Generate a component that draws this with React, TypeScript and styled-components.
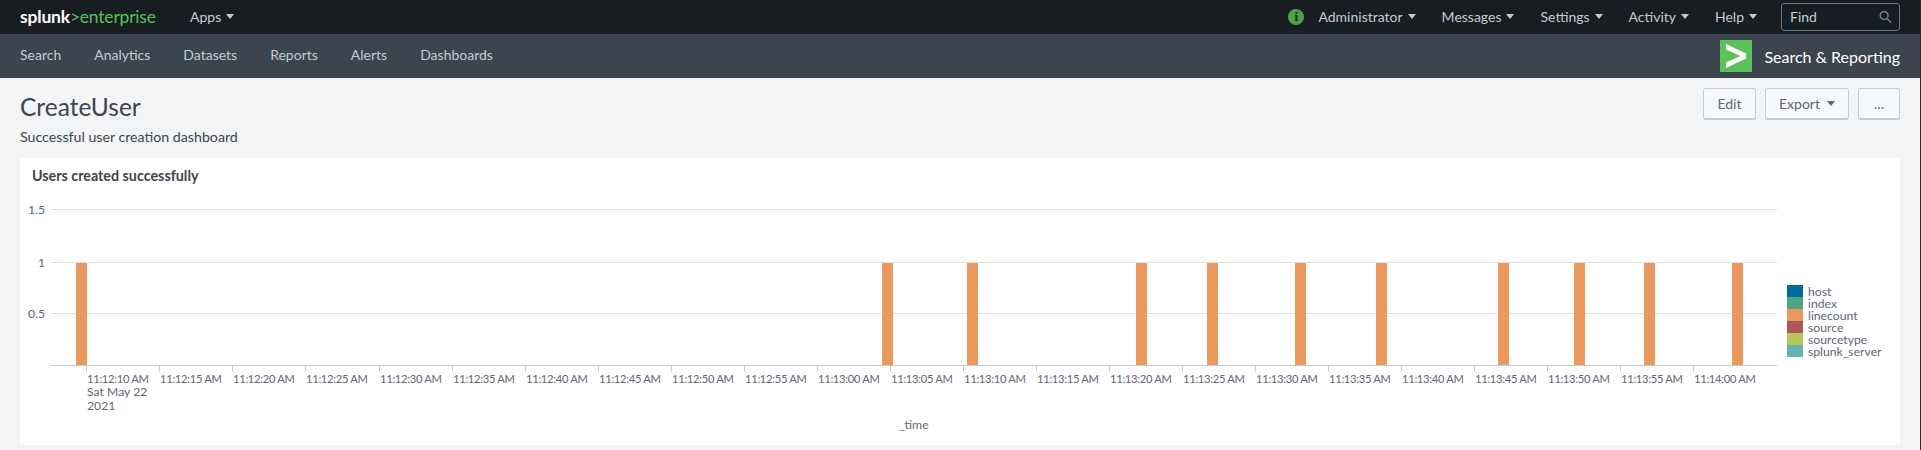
import styled, { createGlobalStyle } from 'styled-components';

const GlobalStyle = createGlobalStyle`
    html, body {
        margin: 0;
        padding: 0;
        background: #f2f4f5;
        font-family: Lato, "Liberation Sans", sans-serif;
        overflow: hidden;
    }
`;

const Page = styled.div`
    width: 1920px;
    height: 450px;
    border-right: 1px solid #2b3033;
    background: #f2f4f5;
`;

// Верхняя чёрная панель
const TopBar = styled.div`
    height: 34px;
    background: #171d21;
    display: flex;
    align-items: center;
    padding: 0 20px;
    box-sizing: border-box;
`;

const Logo = styled.div`
    width: 170px;
    padding-bottom: 2px;
    font-size: 17.5px;
    letter-spacing: -0.2px;
    color: #5cc05c;
`;

const LogoWhite = styled.span`
    color: #fff;
    font-weight: 700;
`;

const MenuButton = styled.div`
    display: flex;
    align-items: center;
    gap: 5px;
    padding-bottom: 2px;
    color: #c3cbd4;
    font-size: 14px;
`;

const Caret = styled.span`
    width: 0;
    height: 0;
    border-left: 4px solid transparent;
    border-right: 4px solid transparent;
    border-top: 5px solid currentColor;
`;

const RightMenu = styled.div`
    margin-left: auto;
    display: flex;
    align-items: center;
    gap: 26px;
`;

const StatusGroup = styled.div`
    display: flex;
    align-items: center;
    gap: 14px;
`;

const InfoDot = styled.span`
    width: 16px;
    height: 16px;
    border-radius: 50%;
    background: #4f9e4a;
    color: #10210f;
    font-family: "Liberation Serif", serif;
    font-size: 13px;
    font-weight: 700;
    display: flex;
    align-items: center;
    justify-content: center;
`;

const FindBox = styled.div`
    width: 119px;
    height: 28px;
    box-sizing: border-box;
    margin-left: -2px;
    border: 1px solid #6b7785;
    border-radius: 3px;
    padding: 0 7px 1px 8px;
    display: flex;
    align-items: center;
    justify-content: space-between;
    color: #c3cbd4;
    font-size: 14px;
`;

// Панель приложения
const AppBar = styled.div`
    height: 44px;
    background: #3c444d;
    display: flex;
    align-items: center;
    padding: 0 20px;
    box-sizing: border-box;
    gap: 33px;
`;

const AppLink = styled.div`
    padding-bottom: 3px;
    color: #c3cbd4;
    font-size: 14px;
`;

const AppTitle = styled.div`
    margin-left: auto;
    display: flex;
    align-items: center;
    gap: 12px;
    color: #fff;
    font-size: 16px;
`;

const AppIcon = styled.div`
    width: 32px;
    height: 32px;
`;

// Заголовок дашборда
const Header = styled.div`
    height: 80px;
    padding: 0 20px;
    display: flex;
    justify-content: space-between;
    box-sizing: border-box;
`;

const Title = styled.h1`
    margin: 14px 0 0;
    font-size: 24.5px;
    font-weight: 400;
    line-height: 30px;
    color: #3c444d;
`;

const Description = styled.p`
    margin: 6px 0 0;
    font-size: 14.2px;
    line-height: 18px;
    color: #3c444d;
`;

const Actions = styled.div`
    margin-top: 10px;
    display: flex;
    gap: 9px;
`;

const ActionButton = styled.div<{ $width: number }>`
    width: ${(p) => p.$width}px;
    height: 32px;
    box-sizing: border-box;
    display: flex;
    align-items: center;
    justify-content: center;
    gap: 7px;
    background: #f7f8fa;
    border: 1px solid #c3cbd4;
    border-bottom-width: 2px;
    border-radius: 3px;
    color: #5c6773;
    font-size: 14px;
`;

// Панель с графиком
const Panel = styled.section`
    margin: 0 20px;
    height: 287px;
    background: #fff;
    position: relative;
`;

const PanelTitle = styled.h2`
    margin: 0;
    padding: 9px 0 0 12px;
    font-size: 14.3px;
    font-weight: 700;
    line-height: 18px;
    color: #3c444d;
`;

const Chart = styled.svg`
    position: absolute;
    left: 0;
    top: 0;
    font-family: Lato, "Liberation Sans", sans-serif;
    font-size: 12.2px;
    fill: #5c6773;
`;

const TimeLabel = styled.text`
    font-size: 11.2px;
    letter-spacing: -0.3px;
`;

const TOP = 158;
const LEFT = 20;
const BASE = 365.5 - TOP;
const STEP = 73.05;

const labels = [
    '11:12:10', '11:12:15', '11:12:20', '11:12:25', '11:12:30', '11:12:35', '11:12:40', '11:12:45',
    '11:12:50', '11:12:55', '11:13:00', '11:13:05', '11:13:10', '11:13:15', '11:13:20', '11:13:25',
    '11:13:30', '11:13:35', '11:13:40', '11:13:45', '11:13:50', '11:13:55', '11:14:00',
];

const bars = [76, 882, 967, 1136, 1207, 1295, 1376, 1498, 1574, 1644, 1732];

const grid = [
    { y: 209.5, label: '1.5' },
    { y: 262.5, label: '1' },
    { y: 313.5, label: '0.5' },
];

const legend = [
    { name: 'host', color: '#006d9c' },
    { name: 'index', color: '#4fa484' },
    { name: 'linecount', color: '#ec9960' },
    { name: 'source', color: '#af575a' },
    { name: 'sourcetype', color: '#b6c75a' },
    { name: 'splunk_server', color: '#62b3b2' },
];

export default function App() {
    return (
        <Page>
            <GlobalStyle />
            <TopBar>
                <Logo>
                    <LogoWhite>splunk</LogoWhite>&gt;enterprise
                </Logo>
                <MenuButton>
                    Apps <Caret />
                </MenuButton>
                <RightMenu>
                    <StatusGroup>
                        <InfoDot>i</InfoDot>
                        <MenuButton>
                            Administrator <Caret />
                        </MenuButton>
                    </StatusGroup>
                    {['Messages', 'Settings', 'Activity', 'Help'].map((item) => (
                        <MenuButton key={item}>
                            {item} <Caret />
                        </MenuButton>
                    ))}
                    <FindBox>
                        Find
                        <svg width="13" height="14" viewBox="0 0 14 14" fill="none" stroke="#7c8793" strokeWidth="1.5">
                            <circle cx="5.5" cy="5.5" r="4.2" />
                            <path d="M8.8 8.8 L13 13" />
                        </svg>
                    </FindBox>
                </RightMenu>
            </TopBar>
            <AppBar>
                {['Search', 'Analytics', 'Datasets', 'Reports', 'Alerts', 'Dashboards'].map((item) => (
                    <AppLink key={item}>{item}</AppLink>
                ))}
                <AppTitle>
                    <AppIcon>
                        <svg width="32" height="32" viewBox="0 0 32 32">
                            <rect width="32" height="32" fill="#5cc05c" />
                            <path d="M6 4 L26 13.5 V18.5 L6 28 V22.5 L20.5 16 L6 9.5 Z" fill="#fff" />
                        </svg>
                    </AppIcon>
                    Search &amp; Reporting
                </AppTitle>
            </AppBar>
            <Header>
                <div>
                    <Title>CreateUser</Title>
                    <Description>Successful user creation dashboard</Description>
                </div>
                <Actions>
                    <ActionButton $width={53}>Edit</ActionButton>
                    <ActionButton $width={84}>
                        Export <Caret />
                    </ActionButton>
                    <ActionButton $width={42}>...</ActionButton>
                </Actions>
            </Header>
            <Panel>
                <PanelTitle>Users created successfully</PanelTitle>
                <Chart width="1880" height="287" viewBox="0 0 1880 287">
                    {grid.map((g) => (
                        <g key={g.label}>
                            <line x1={51 - LEFT} x2={1777 - LEFT} y1={g.y - TOP} y2={g.y - TOP} stroke="#dce0e5" />
                            <text x={25} y={g.y - TOP + 4} textAnchor="end">
                                {g.label}
                            </text>
                        </g>
                    ))}
                    {bars.map((x) => (
                        <rect key={x} x={x - LEFT} y={263 - TOP} width={11} height={BASE - (263 - TOP)} fill="#ec9960" />
                    ))}
                    <line x1={51 - LEFT} x2={1777 - LEFT} y1={BASE} y2={BASE} stroke="#c3cbd4" />
                    {labels.map((label, i) => {
                        const x = Math.round(86.3 + i * STEP - LEFT) + 0.5;
                        return (
                            <g key={label}>
                                <line x1={x} x2={x} y1={BASE} y2={BASE + 6} stroke="#c3cbd4" />
                                <TimeLabel x={x + 0.5} y={BASE + 17}>
                                    {label} AM
                                </TimeLabel>
                            </g>
                        );
                    })}
                    <text x={67} y={BASE + 30}>
                        Sat May 22
                    </text>
                    <text x={67} y={BASE + 44}>
                        2021
                    </text>
                    <text x={879} y={BASE + 63}>
                        _time
                    </text>
                    {legend.map((item, i) => (
                        <g key={item.name}>
                            <rect x={1787 - LEFT} y={285 + i * 12 - TOP} width={16} height={12} fill={item.color} />
                            <text x={1808 - LEFT} y={296 + i * 12 - TOP}>
                                {item.name}
                            </text>
                        </g>
                    ))}
                </Chart>
            </Panel>
        </Page>
    );
}
